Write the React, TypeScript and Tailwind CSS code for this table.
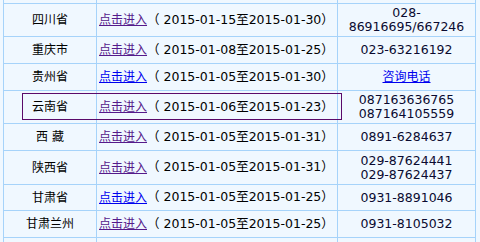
import React from "react";

type Row = {
  name: string;
  visited: boolean;
  d1: string;
  d2: string;
  phone?: string[];
  phoneLink?: string;
  h: string;
};

const rows: Row[] = [
  { name: "四川省", visited: true, d1: "2015-01-15", d2: "2015-01-30", phone: ["028-", "86916695/667246"], h: "h-[32px]" },
  { name: "重庆市", visited: true, d1: "2015-01-08", d2: "2015-01-25", phone: ["023-63216192"], h: "h-[26px]" },
  { name: "贵州省", visited: false, d1: "2015-01-05", d2: "2015-01-30", phoneLink: "咨询电话", h: "h-[26px]" },
  { name: "云南省", visited: true, d1: "2015-01-06", d2: "2015-01-23", phone: ["087163636765", "087164105559"], h: "h-[32px]" },
  { name: "西 藏", visited: true, d1: "2015-01-05", d2: "2015-01-31", phone: ["0891-6284637"], h: "h-[26px]" },
  { name: "陕西省", visited: true, d1: "2015-01-05", d2: "2015-01-31", phone: ["029-87624441", "029-87624437"], h: "h-[33px]" },
  { name: "甘肃省", visited: false, d1: "2015-01-05", d2: "2015-01-25", phone: ["0931-8891046"], h: "h-[25px]" },
  { name: "甘肃兰州", visited: true, d1: "2015-01-05", d2: "2015-01-25", phone: ["0931-8105032"], h: "h-[26px]" },
];

const font = { fontFamily: '"DejaVu Sans", "Noto Sans CJK SC", sans-serif' };

export default function App() {
  return (
    <div className="relative w-[480px] h-[242px] overflow-hidden bg-[#f0f8ff] text-black text-[12.5px]" style={font}>
      <div className="ml-[3px] w-[473px] grid grid-cols-[92px_240px_137px] gap-px bg-[#a6d3fa] px-px pb-px">
        <div className="h-[3px] bg-[#f0f8ff]" />
        <div className="h-[3px] bg-[#f0f8ff]" />
        <div className="h-[3px] bg-[#f0f8ff]" />
        {rows.map((r, i) => (
          <React.Fragment key={i}>
            <div className={`${r.h} bg-[#f0f8ff] flex items-center justify-center whitespace-pre text-[12px]`}>
              {r.name}
            </div>
            <div className={`${r.h} bg-[#f0f8ff] flex items-center pl-[2px] whitespace-pre`}>
              <span className={`underline text-[12px] ${r.visited ? "text-[#551a8b]" : "text-[#0000ee]"}`}>点击进入</span>
              <span>（ {r.d1}至{r.d2}）</span>
            </div>
            <div className={`${r.h} bg-[#f0f8ff] flex flex-col items-center justify-center leading-[14px] text-[#0a0a30]`}>
              {r.phone ? (
                r.phone.map((p, j) => <div key={j}>{p}</div>)
              ) : (
                <span className="underline text-[#0000ee] text-[12px] leading-[16px]">{r.phoneLink}</span>
              )}
            </div>
          </React.Fragment>
        ))}
        <div className="h-[26px] bg-[#f0f8ff]" />
        <div className="h-[26px] bg-[#f0f8ff]" />
        <div className="h-[26px] bg-[#f0f8ff]" />
      </div>
      <div className="absolute left-[22px] top-[93px] w-[320px] h-[27px] border border-[#5a0a6a]" />
    </div>
  );
}
